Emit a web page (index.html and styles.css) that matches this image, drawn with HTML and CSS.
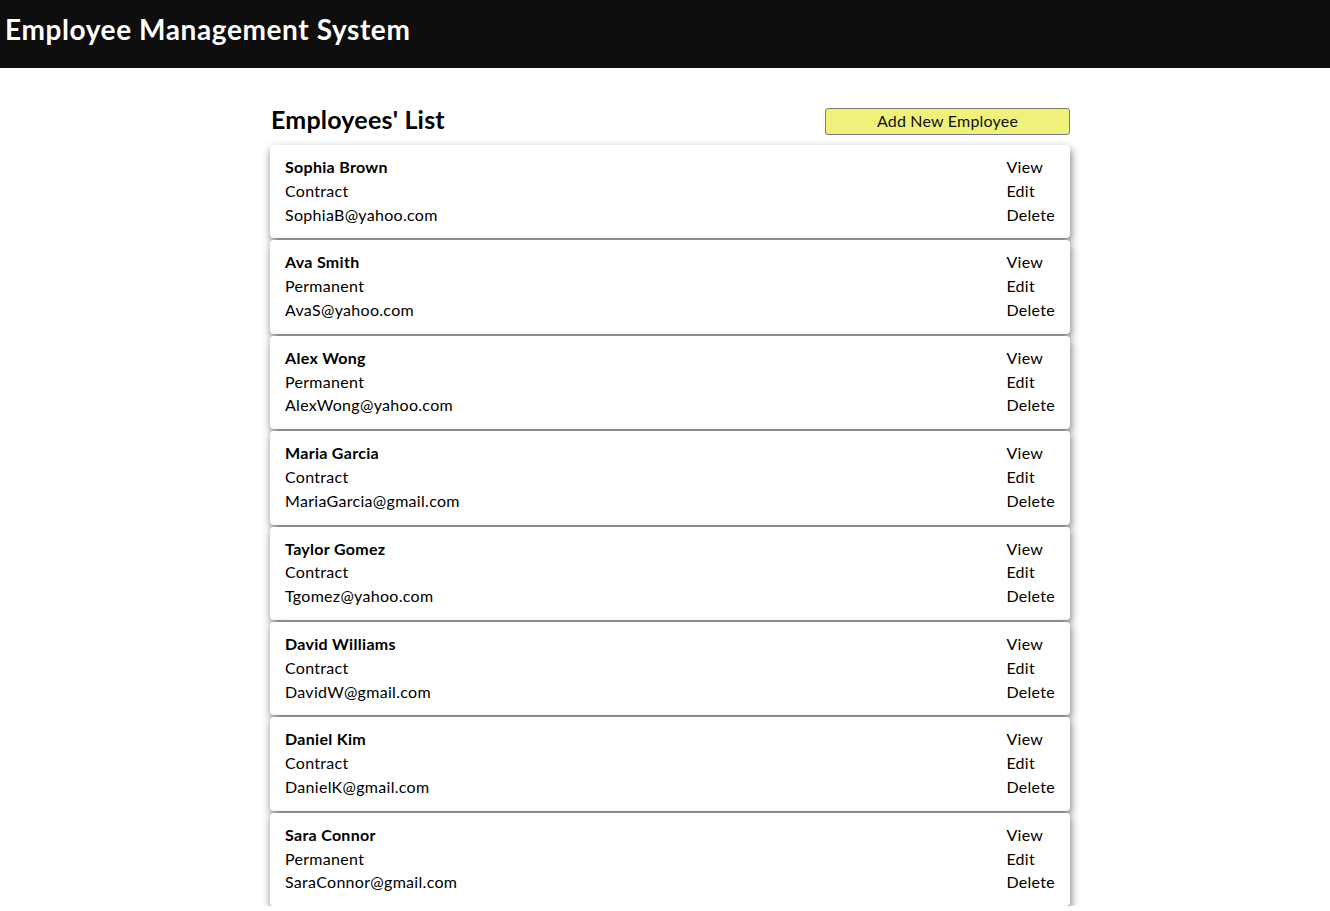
FILE: index.html
```html
<!DOCTYPE html>
<html lang="en">
<head>
<meta charset="utf-8">
<title>Employee Management System</title>
<link rel="stylesheet" href="styles.css">
</head>
<body>
<header class="topbar">
  <h1 class="brand">Employee Management System</h1>
</header>
<main class="content">
  <div class="list-head">
    <h2 class="list-title">Employees' List</h2>
    <button class="add-btn">Add New Employee</button>
  </div>
  <div class="cards">
    <div class="card"><div class="info"><div class="name">Sophia Brown</div><div>Contract</div><div>SophiaB@yahoo.com</div></div><div class="actions"><a>View</a><a>Edit</a><a>Delete</a></div></div>
    <div class="card"><div class="info"><div class="name">Ava Smith</div><div>Permanent</div><div>AvaS@yahoo.com</div></div><div class="actions"><a>View</a><a>Edit</a><a>Delete</a></div></div>
    <div class="card"><div class="info"><div class="name">Alex Wong</div><div>Permanent</div><div>AlexWong@yahoo.com</div></div><div class="actions"><a>View</a><a>Edit</a><a>Delete</a></div></div>
    <div class="card"><div class="info"><div class="name">Maria Garcia</div><div>Contract</div><div>MariaGarcia@gmail.com</div></div><div class="actions"><a>View</a><a>Edit</a><a>Delete</a></div></div>
    <div class="card"><div class="info"><div class="name">Taylor Gomez</div><div>Contract</div><div>Tgomez@yahoo.com</div></div><div class="actions"><a>View</a><a>Edit</a><a>Delete</a></div></div>
    <div class="card"><div class="info"><div class="name">David Williams</div><div>Contract</div><div>DavidW@gmail.com</div></div><div class="actions"><a>View</a><a>Edit</a><a>Delete</a></div></div>
    <div class="card"><div class="info"><div class="name">Daniel Kim</div><div>Contract</div><div>DanielK@gmail.com</div></div><div class="actions"><a>View</a><a>Edit</a><a>Delete</a></div></div>
    <div class="card"><div class="info"><div class="name">Sara Connor</div><div>Permanent</div><div>SaraConnor@gmail.com</div></div><div class="actions"><a>View</a><a>Edit</a><a>Delete</a></div></div>
  </div>
</main>
</body>
</html>
```
FILE: styles.css
```css
* { box-sizing: border-box; }
body {
  margin: 0;
  font-family: "Lato", "Noto Sans", sans-serif;
  color: #000;
  background: #fff;
}
.topbar {
  background: #0e0e0e;
  height: 68px;
  padding: 0 5px;
  display: flex;
  align-items: center;
}
.brand {
  margin: 0;
  color: #fff;
  font-size: 28px;
  font-weight: 700;
  letter-spacing: 0.6px;
  padding-bottom: 10px;
}
.content {
  width: 800px;
  margin: 0 0 0 calc(50% - 395px);
  padding-top: 36px;
}
.list-head {
  display: flex;
  justify-content: space-between;
  align-items: center;
  height: 34px;
  margin-bottom: 7px;
}
.list-title {
  margin: 0 0 0 1px;
  font-size: 25px;
  font-weight: 700;
  letter-spacing: 0.2px;
  padding-bottom: 4px;
}
.add-btn {
  width: 245px;
  height: 27px;
  background: #eff17a;
  border: 1px solid #7d7d7d;
  border-radius: 3px;
  font-family: inherit;
  font-size: 16px;
  letter-spacing: 0.2px;
  color: #111;
  padding: 0 0 2px;
}
.cards {
  display: flex;
  flex-direction: column;
  gap: 2px;
}
.card {
  display: flex;
  justify-content: space-between;
  padding: 10px 15px 12px;
  border-radius: 4px;
  background: #fff;
  box-shadow: 1px 4px 8px rgba(0, 0, 0, 0.55);
  font-size: 16px;
  letter-spacing: 0.3px;
  line-height: 23.8px;
}
.name { font-weight: 700; }
.actions {
  display: flex;
  flex-direction: column;
}
.actions a { color: #000; }
```
